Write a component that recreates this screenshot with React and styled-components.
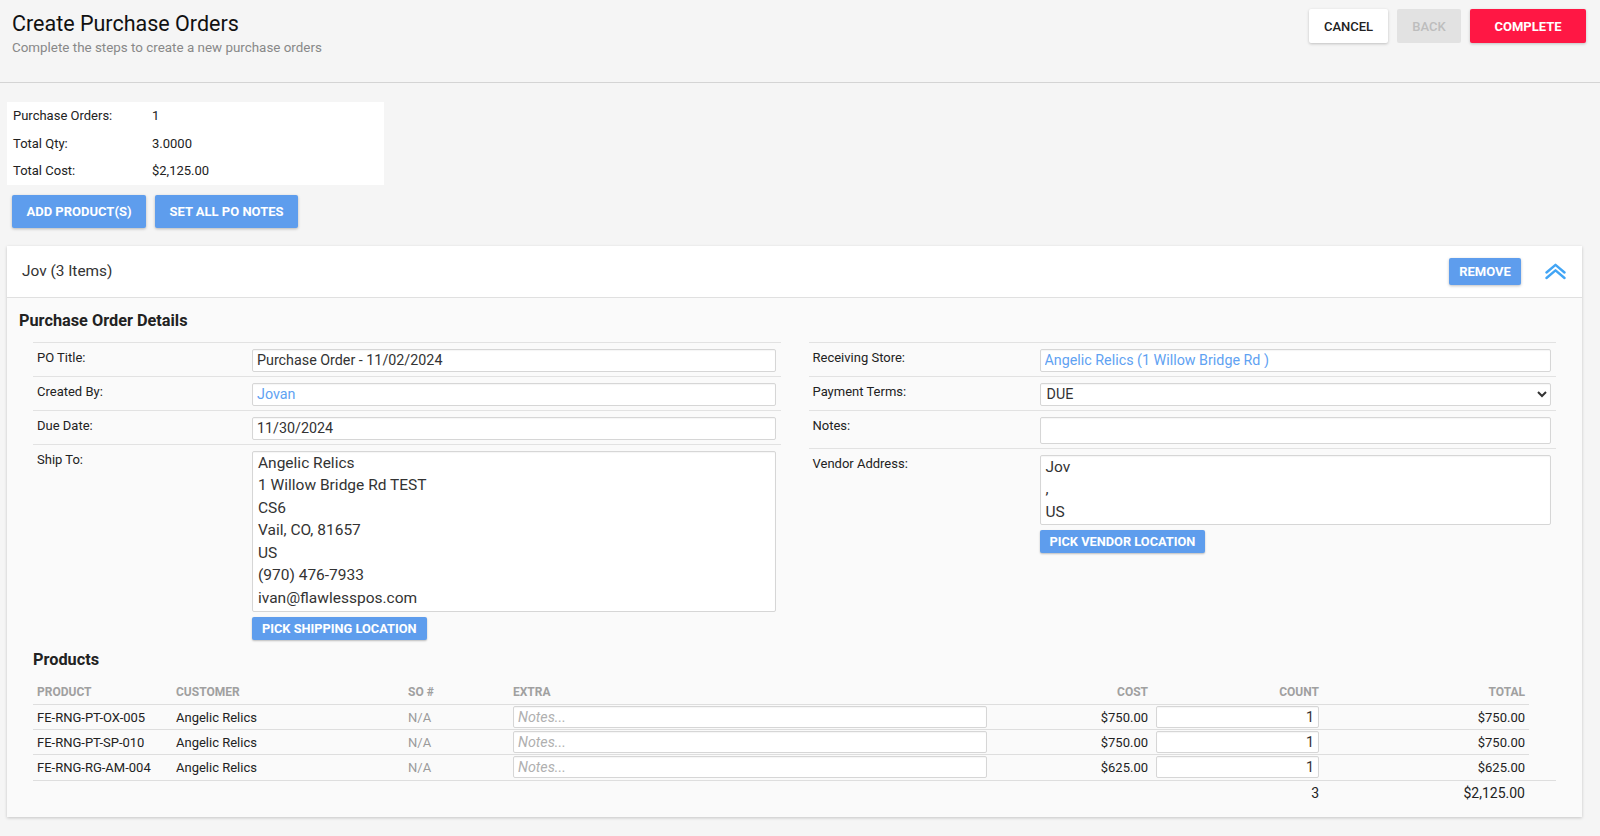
import React from "react";
import styled, { createGlobalStyle } from "styled-components";

const GlobalStyle = createGlobalStyle`
  body {
    margin: 0;
    background: #f5f5f5;
    font-family: Roboto, "Liberation Sans", Arial, sans-serif;
    color: #222;
  }
  * { box-sizing: border-box; }
`;

const blue = "#5e9ded";
const linkBlue = "#5fa2f2";

const products = [
  { sku: "FE-RNG-PT-OX-005", customer: "Angelic Relics", so: "N/A", cost: "$750.00", count: "1", total: "$750.00" },
  { sku: "FE-RNG-PT-SP-010", customer: "Angelic Relics", so: "N/A", cost: "$750.00", count: "1", total: "$750.00" },
  { sku: "FE-RNG-RG-AM-004", customer: "Angelic Relics", so: "N/A", cost: "$625.00", count: "1", total: "$625.00" },
];

function ChevronsUp() {
  return (
    <svg width="21" height="17" viewBox="0 0 21 17" fill="none" stroke="#42a5f5" strokeWidth="2.4" strokeLinecap="round" strokeLinejoin="round">
      <polyline points="1.5,9.5 10.5,1.8 19.5,9.5" />
      <polyline points="1.5,15 10.5,7.3 19.5,15" />
    </svg>
  );
}

export default function App() {
  return (
    <>
      <GlobalStyle />
      <Header>
        <TitleBlock>
          <Title>Create Purchase Orders</Title>
          <Subtitle>Complete the steps to create a new purchase orders</Subtitle>
        </TitleBlock>
        <TopActions>
          <TopButton $w={79}>CANCEL</TopButton>
          <TopButton $w={64} $variant="disabled">BACK</TopButton>
          <TopButton $w={116} $variant="danger">COMPLETE</TopButton>
        </TopActions>
      </Header>

      <Summary>
        <SummaryRow><SummaryLabel>Purchase Orders:</SummaryLabel><span>1</span></SummaryRow>
        <SummaryRow><SummaryLabel>Total Qty:</SummaryLabel><span>3.0000</span></SummaryRow>
        <SummaryRow><SummaryLabel>Total Cost:</SummaryLabel><span>$2,125.00</span></SummaryRow>
      </Summary>

      <ActionRow>
        <BlueButton $h={33} $w={134}>ADD PRODUCT(S)</BlueButton>
        <BlueButton $h={33} $w={143}>SET ALL PO NOTES</BlueButton>
      </ActionRow>

      <Card>
        <CardHeader>
          <VendorName>Jov (3 Items)</VendorName>
          <HeaderTools>
            <BlueButton $h={27} $w={72}>REMOVE</BlueButton>
            <ChevronsUp />
          </HeaderTools>
        </CardHeader>

        <CardBody>
          <SectionTitle>Purchase Order Details</SectionTitle>
          <Columns>
            <Column>
              <FieldRow>
                <Label $w={215}>PO Title:</Label>
                <Field><TextInput defaultValue="Purchase Order - 11/02/2024" /></Field>
              </FieldRow>
              <FieldRow>
                <Label $w={215}>Created By:</Label>
                <Field><TextInput $link defaultValue="Jovan" /></Field>
              </FieldRow>
              <FieldRow>
                <Label $w={215}>Due Date:</Label>
                <Field><TextInput defaultValue="11/30/2024" /></Field>
              </FieldRow>
              <FieldRow>
                <Label $w={215}>Ship To:</Label>
                <Field>
                  <Address
                    $h={161}
                    readOnly
                    value={"Angelic Relics\n1 Willow Bridge Rd TEST\nCS6\nVail, CO, 81657\nUS\n(970) 476-7933\nivan@flawlesspos.com"}
                  />
                  <SmallButton>PICK SHIPPING LOCATION</SmallButton>
                </Field>
              </FieldRow>
            </Column>

            <Column>
              <FieldRow>
                <Label $w={227}>Receiving Store:</Label>
                <Field><TextInput $link defaultValue="Angelic Relics (1 Willow Bridge Rd )" /></Field>
              </FieldRow>
              <FieldRow>
                <Label $w={227}>Payment Terms:</Label>
                <Field>
                  <Select defaultValue="DUE">
                    <option>DUE</option>
                  </Select>
                </Field>
              </FieldRow>
              <FieldRow>
                <Label $w={227}>Notes:</Label>
                <Field><NotesBox rows={1} /></Field>
              </FieldRow>
              <FieldRow>
                <Label $w={227}>Vendor Address:</Label>
                <Field>
                  <Address $h={70} readOnly value={"Jov\n,\nUS"} />
                  <SmallButton>PICK VENDOR LOCATION</SmallButton>
                </Field>
              </FieldRow>
            </Column>
          </Columns>

          <Products>
            <SectionTitle>Products</SectionTitle>
            <Table>
              <colgroup>
                <col style={{ width: 139 }} />
                <col style={{ width: 232 }} />
                <col style={{ width: 105 }} />
                <col style={{ width: 482 }} />
                <col style={{ width: 161 }} />
                <col style={{ width: 171 }} />
                <col style={{ width: 206 }} />
              </colgroup>
              <thead>
                <tr>
                  <Th>Product</Th>
                  <Th>Customer</Th>
                  <Th>SO #</Th>
                  <Th>Extra</Th>
                  <Th $right>Cost</Th>
                  <Th $right>Count</Th>
                  <Th $right>Total</Th>
                </tr>
              </thead>
              <tbody>
                {products.map((p) => (
                  <tr key={p.sku}>
                    <Td>{p.sku}</Td>
                    <Td>{p.customer}</Td>
                    <Td $muted>{p.so}</Td>
                    <Td><CellInput placeholder="Notes..." /></Td>
                    <Td $right>{p.cost}</Td>
                    <Td><CellInput $right defaultValue={p.count} /></Td>
                    <Td $right>{p.total}</Td>
                  </tr>
                ))}
              </tbody>
            </Table>
            <TableFooter>
              <span />
              <FooterCell>3</FooterCell>
              <FooterCell>$2,125.00</FooterCell>
            </TableFooter>
          </Products>
        </CardBody>
      </Card>
    </>
  );
}

const Header = styled.header`
  display: flex;
  justify-content: space-between;
  align-items: flex-start;
  height: 83px;
  padding: 9px 14px 0 12px;
  border-bottom: 1px solid #d4d4d4;
`;

const TitleBlock = styled.div`
  padding-top: 2px;
`;

const Title = styled.h1`
  margin: 0;
  font-size: 21.5px;
  line-height: 25px;
  font-weight: 400;
  color: #111;
`;

const Subtitle = styled.div`
  margin-top: 3px;
  font-size: 13.4px;
  line-height: 18px;
  color: #888;
`;

const TopActions = styled.div`
  display: flex;
  gap: 9px;
`;

const TopButton = styled.button`
  width: ${(p) => p.$w}px;
  height: 34px;
  border: none;
  border-radius: 2px;
  font-family: inherit;
  font-size: 13px;
  font-weight: ${(p) => (p.$variant === "danger" ? 700 : 500)};
  background: ${(p) =>
    p.$variant === "danger" ? "#ff1744" : p.$variant === "disabled" ? "#e2e2e2" : "#fff"};
  color: ${(p) =>
    p.$variant === "danger" ? "#fff" : p.$variant === "disabled" ? "#bdbdbd" : "#222"};
  box-shadow: ${(p) =>
    p.$variant === "disabled" ? "none" : "0 1px 3px rgba(0, 0, 0, 0.22)"};
`;

const Summary = styled.div`
  width: 377px;
  margin: 19px 0 0 7px;
  background: #fff;
`;

const SummaryRow = styled.div`
  display: flex;
  align-items: center;
  height: 27.5px;
  padding-left: 6px;
  font-size: 13px;
  color: #222;
`;

const SummaryLabel = styled.span`
  width: 139px;
`;

const ActionRow = styled.div`
  display: flex;
  gap: 9px;
  margin: 10px 0 0 12px;
`;

const BlueButton = styled.button`
  width: ${(p) => p.$w}px;
  height: ${(p) => p.$h}px;
  padding: 0;
  border: none;
  border-radius: 2px;
  background: ${blue};
  color: #fff;
  font-family: inherit;
  font-size: 13px;
  font-weight: 700;
  box-shadow: 0 1px 3px rgba(0, 0, 0, 0.25);
`;

const Card = styled.section`
  margin: 18px 18px 20px 7px;
  background: #fafafa;
  box-shadow: 0 1px 3px rgba(0, 0, 0, 0.2);
`;

const CardHeader = styled.div`
  display: flex;
  justify-content: space-between;
  align-items: center;
  height: 52px;
  padding: 0 16px 0 15px;
  background: #fff;
  border-bottom: 1px solid #e0e0e0;
`;

const VendorName = styled.div`
  font-size: 15.4px;
  color: #333;
`;

const HeaderTools = styled.div`
  display: flex;
  align-items: center;
  gap: 24px;
`;

const CardBody = styled.div`
  padding: 13px 26px 12px 12px;
`;

const SectionTitle = styled.h2`
  margin: 0;
  font-size: 16.3px;
  line-height: 20px;
  font-weight: 700;
  color: #222;
`;

const Columns = styled.div`
  display: grid;
  grid-template-columns: 1fr 1fr;
  gap: 28px;
  margin: 11px 0 0 14px;
`;

const Column = styled.div`
  display: flex;
  flex-direction: column;
`;

const FieldRow = styled.div`
  display: flex;
  align-items: flex-start;
  padding: 6px 5px 4px 4px;
  border-top: 1px solid #e2e2e2;
`;

const Label = styled.div`
  width: ${(p) => p.$w}px;
  flex-shrink: 0;
  font-size: 13px;
  line-height: 18px;
  color: #222;
`;

const Field = styled.div`
  flex: 1;
  display: flex;
  flex-direction: column;
  align-items: flex-start;
`;

const inputBase = `
  width: 100%;
  border: 1px solid #d6d6d6;
  border-radius: 2px;
  background: #fff;
  font-family: inherit;
  font-size: 14.3px;
  color: #333;
  box-shadow: inset 0 1px 1px rgba(0, 0, 0, 0.04);
  outline: none;
`;

const TextInput = styled.input`
  ${inputBase}
  height: 23px;
  padding: 0 4px;
  color: ${(p) => (p.$link ? linkBlue : "#333")};
`;

const Select = styled.select`
  ${inputBase}
  height: 23px;
  padding: 0 2px;
`;

const NotesBox = styled.textarea`
  ${inputBase}
  height: 27px;
  resize: none;
  overflow: hidden;
  padding: 2px 4px;
`;

const Address = styled.textarea`
  ${inputBase}
  height: ${(p) => p.$h}px;
  padding: 0 5px;
  font-size: 15.5px;
  line-height: 22.6px;
  resize: none;
  overflow: hidden;
`;

const SmallButton = styled.button`
  height: 23px;
  margin-top: 5px;
  padding: 0 10px;
  border: none;
  border-radius: 2px;
  background: ${blue};
  color: #fff;
  font-family: inherit;
  font-size: 12.8px;
  font-weight: 700;
  box-shadow: 0 1px 2px rgba(0, 0, 0, 0.25);
`;

const Products = styled.div`
  margin: 6px 0 0 14px;
`;

const Table = styled.table`
  width: 1496px;
  margin-top: 11px;
  table-layout: fixed;
  border-collapse: collapse;
`;

const Th = styled.th`
  height: 24px;
  padding: 0 4px;
  text-align: ${(p) => (p.$right ? "right" : "left")};
  font-size: 12px;
  font-weight: 700;
  text-transform: uppercase;
  color: #a0a0a0;
`;

const Td = styled.td`
  height: 25px;
  padding: 0 4px;
  border-top: 1px solid #dedede;
  text-align: ${(p) => (p.$right ? "right" : "left")};
  font-size: 13px;
  color: ${(p) => (p.$muted ? "#9a9a9a" : "#222")};
  white-space: nowrap;
`;

const CellInput = styled.input`
  ${inputBase}
  display: block;
  height: 22px;
  padding: 0 4px;
  text-align: ${(p) => (p.$right ? "right" : "left")};
  &::placeholder {
    color: #b0b0b0;
    font-style: italic;
  }
`;

const TableFooter = styled.div`
  display: grid;
  grid-template-columns: 1119px 171px 206px;
  height: 25px;
  border-top: 1px solid #dedede;
  align-items: center;
`;

const FooterCell = styled.div`
  padding-right: 4px;
  text-align: right;
  font-size: 14px;
  color: #222;
`;
